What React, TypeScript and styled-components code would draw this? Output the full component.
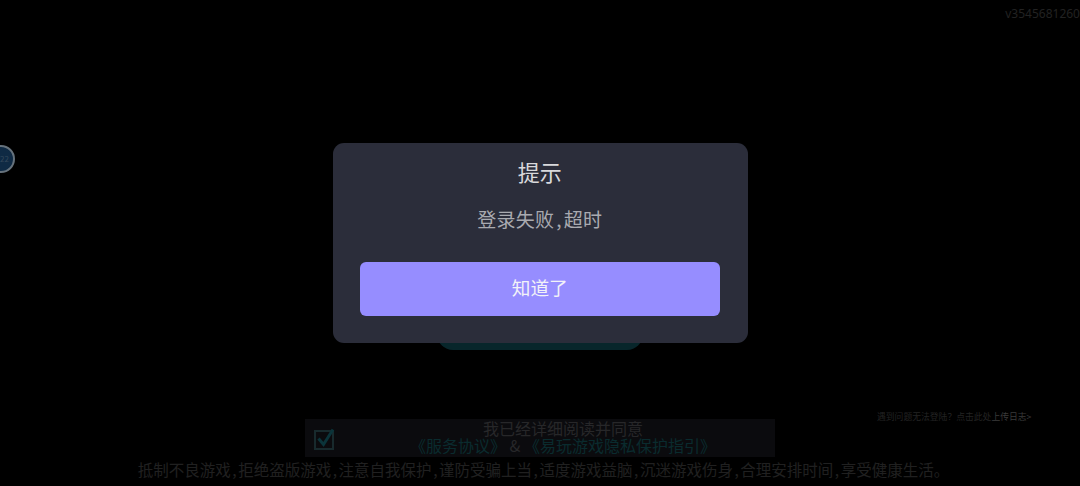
import React from "react";
import styled, { createGlobalStyle } from "styled-components";

const Global = createGlobalStyle`
  html, body { margin: 0; padding: 0; background: #000; }
  body { font-family: "Noto Sans CJK SC", "Noto Sans", sans-serif; overflow: hidden; }
`;

const Stage = styled.div`
  position: relative;
  width: 1080px;
  height: 486px;
  background: #000;
  overflow: hidden;
  display: flex;
  flex-direction: column;
  align-items: center;
`;

const TopBar = styled.div`
  align-self: stretch;
  height: 30px;
  display: flex;
  justify-content: flex-end;
  padding-top: 6px;
  box-sizing: border-box;
`;

const Version = styled.span`
  font: 12px/16px "Noto Sans", sans-serif;
  color: #222;
  white-space: nowrap;
`;

const FloatBall = styled.div`
  position: absolute;
  left: -13px;
  top: 145px;
  width: 28px;
  height: 28px;
  box-sizing: border-box;
  border-radius: 50%;
  border: 2px solid #66727c;
  background: #0f2a44;
  color: #33475a;
  font-size: 8px;
  line-height: 24px;
  text-align: right;
  padding-right: 4px;
`;

const EnterButton = styled.div`
  width: 206px;
  height: 52px;
  margin-top: 268px;
  border-radius: 16px;
  background: #08262b;
`;

const BottomRow = styled.div`
  align-self: stretch;
  margin-top: 69px;
  display: grid;
  grid-template-columns: 305px 470px 1fr;
  align-items: start;
`;

const Agreement = styled.div`
  grid-column: 2;
  height: 38px;
  background: #0b0b0e;
  display: flex;
`;

const CheckIcon = styled.svg`
  flex: none;
  width: 24px;
  height: 24px;
  margin: 7px 0 0 7px;
`;

const AgreementText = styled.div`
  flex: 1;
  margin-left: 15px;
  text-align: center;
  font-size: 16px;
  line-height: 17px;
  padding-top: 1px;
  color: #272729;
`;

const Line = styled.div`
  white-space: nowrap;
`;

const LinkText = styled.span`
  color: #0a2b2e;
`;

const UploadLink = styled.div`
  font-size: 8.8px;
  line-height: 14px;
  margin: -9px 0 0 102px;
  color: #232323;
  white-space: nowrap;
`;

const UploadEm = styled.span`
  color: #3a3a3a;
`;

const Notice = styled.div`
  font-size: 15.5px;
  line-height: 24px;
  margin-left: 7px;
  color: #202020;
  white-space: nowrap;
`;

const Comma = styled.span`
  margin: 0 0.1em;
`;

const Overlay = styled.div`
  position: absolute;
  inset: 0;
  display: flex;
  align-items: center;
  justify-content: center;
`;

const Dialog = styled.div`
  width: 415px;
  height: 200px;
  box-sizing: border-box;
  padding: 13px 28px 0 27.5px;
  border-radius: 11px;
  background: #2b2d3a;
  display: flex;
  flex-direction: column;
  align-items: stretch;
  text-align: center;
`;

const Title = styled.div`
  font-size: 22px;
  line-height: 30px;
  color: #d9d9dc;
`;

const Message = styled.div`
  font-size: 19px;
  line-height: 28px;
  margin-top: 19px;
  letter-spacing: 0.3px;
  color: #a9aab0;
`;

const ConfirmButton = styled.button`
  margin-top: 29px;
  height: 54px;
  border: 0;
  padding: 0 0 5px;
  border-radius: 6px;
  background: #968dff;
  color: #f2f2f8;
  font: 18.7px/28px "Noto Sans CJK SC", "Noto Sans", sans-serif;
`;

const withCommas = (text: string) =>
  text.split(",").map((part, i, all) => (
    <React.Fragment key={i}>
      {part}
      {i < all.length - 1 && <Comma>,</Comma>}
    </React.Fragment>
  ));

export default function App() {
  return (
    <Stage>
      <Global />
      <TopBar>
        <Version>v3545681260</Version>
      </TopBar>
      <FloatBall>22</FloatBall>
      <EnterButton />
      <BottomRow>
        <Agreement>
          <CheckIcon viewBox="0 0 24 24" fill="none">
            <rect x="3" y="5" width="18" height="18" stroke="#182a2d" strokeWidth="2" />
            <path d="M6.5 12.5l5 6L21 3.5" stroke="#0b343a" strokeWidth="3" />
          </CheckIcon>
          <AgreementText>
            <Line>我已经详细阅读并同意</Line>
            <Line>
              <LinkText>《服务协议》</LinkText> &amp; <LinkText>《易玩游戏隐私保护指引》</LinkText>
            </Line>
          </AgreementText>
        </Agreement>
        <UploadLink>
          遇到问题无法登陆？点击此处<UploadEm>上传日志&gt;</UploadEm>
        </UploadLink>
      </BottomRow>
      <Notice>
        {withCommas("抵制不良游戏,拒绝盗版游戏,注意自我保护,谨防受骗上当,适度游戏益脑,沉迷游戏伤身,合理安排时间,享受健康生活。")}
      </Notice>
      <Overlay>
        <Dialog>
          <Title>提示</Title>
          <Message>{withCommas("登录失败,超时")}</Message>
          <ConfirmButton>知道了</ConfirmButton>
        </Dialog>
      </Overlay>
    </Stage>
  );
}
